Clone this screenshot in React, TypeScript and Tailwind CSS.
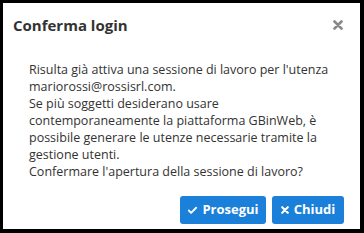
import { Check } from 'lucide-react';

function Cross({ className }: { className?: string }) {
    return (
        <svg viewBox="0 0 10 10" className={className} fill="none" stroke="currentColor" strokeWidth={2.6} strokeLinecap="round">
            <path d="M1.5 1.5 L8.5 8.5 M8.5 1.5 L1.5 8.5" />
        </svg>
    );
}

export default function App() {
    return (
        <div className="w-[364px] h-[233px] bg-black pt-[3px] pl-[3px] pr-[4px] pb-[4px]">
            <div className="w-full h-full bg-white flex flex-col text-[#333] font-['Segoe_UI','Open_Sans',sans-serif]">
                <header className="flex items-center justify-between pl-[10px] pr-[17px] pt-[11px] h-[34px]">
                    <h1 className="text-[15px] font-bold leading-none">Conferma login</h1>
                    <Cross className="w-[10px] h-[10px] text-[#888] -mt-[2px]" />
                </header>

                <div className="pl-[26px] pr-[14px] pt-[24px] text-[12.5px] leading-[17px]">
                    <p>Risulta già attiva una sessione di lavoro per l'utenza mariorossi@rossisrl.com.</p>
                    <p className="pr-[60px]">Se più soggetti desiderano usare</p>
                    <p>contemporaneamente la piattaforma GBinWeb, è possibile generare le utenze necessarie tramite la gestione utenti.</p>
                    <p>Confermare l'apertura della sessione di lavoro?</p>
                </div>

                <div className="flex justify-end gap-[6px] pr-[16px] mt-auto mb-[5px]">
                    <button className="flex items-center gap-[4px] h-[28px] w-[86px] justify-center rounded-[3px] bg-[#1a80d9] text-white text-[13px] font-bold">
                        <Check className="w-[11px] h-[11px]" strokeWidth={4} />
                        Prosegui
                    </button>
                    <button className="flex items-center gap-[5px] h-[28px] w-[72px] justify-center rounded-[3px] bg-[#1a80d9] text-white text-[13px] font-bold">
                        <Cross className="w-[8px] h-[8px]" />
                        Chiudi
                    </button>
                </div>
            </div>
        </div>
    );
}
